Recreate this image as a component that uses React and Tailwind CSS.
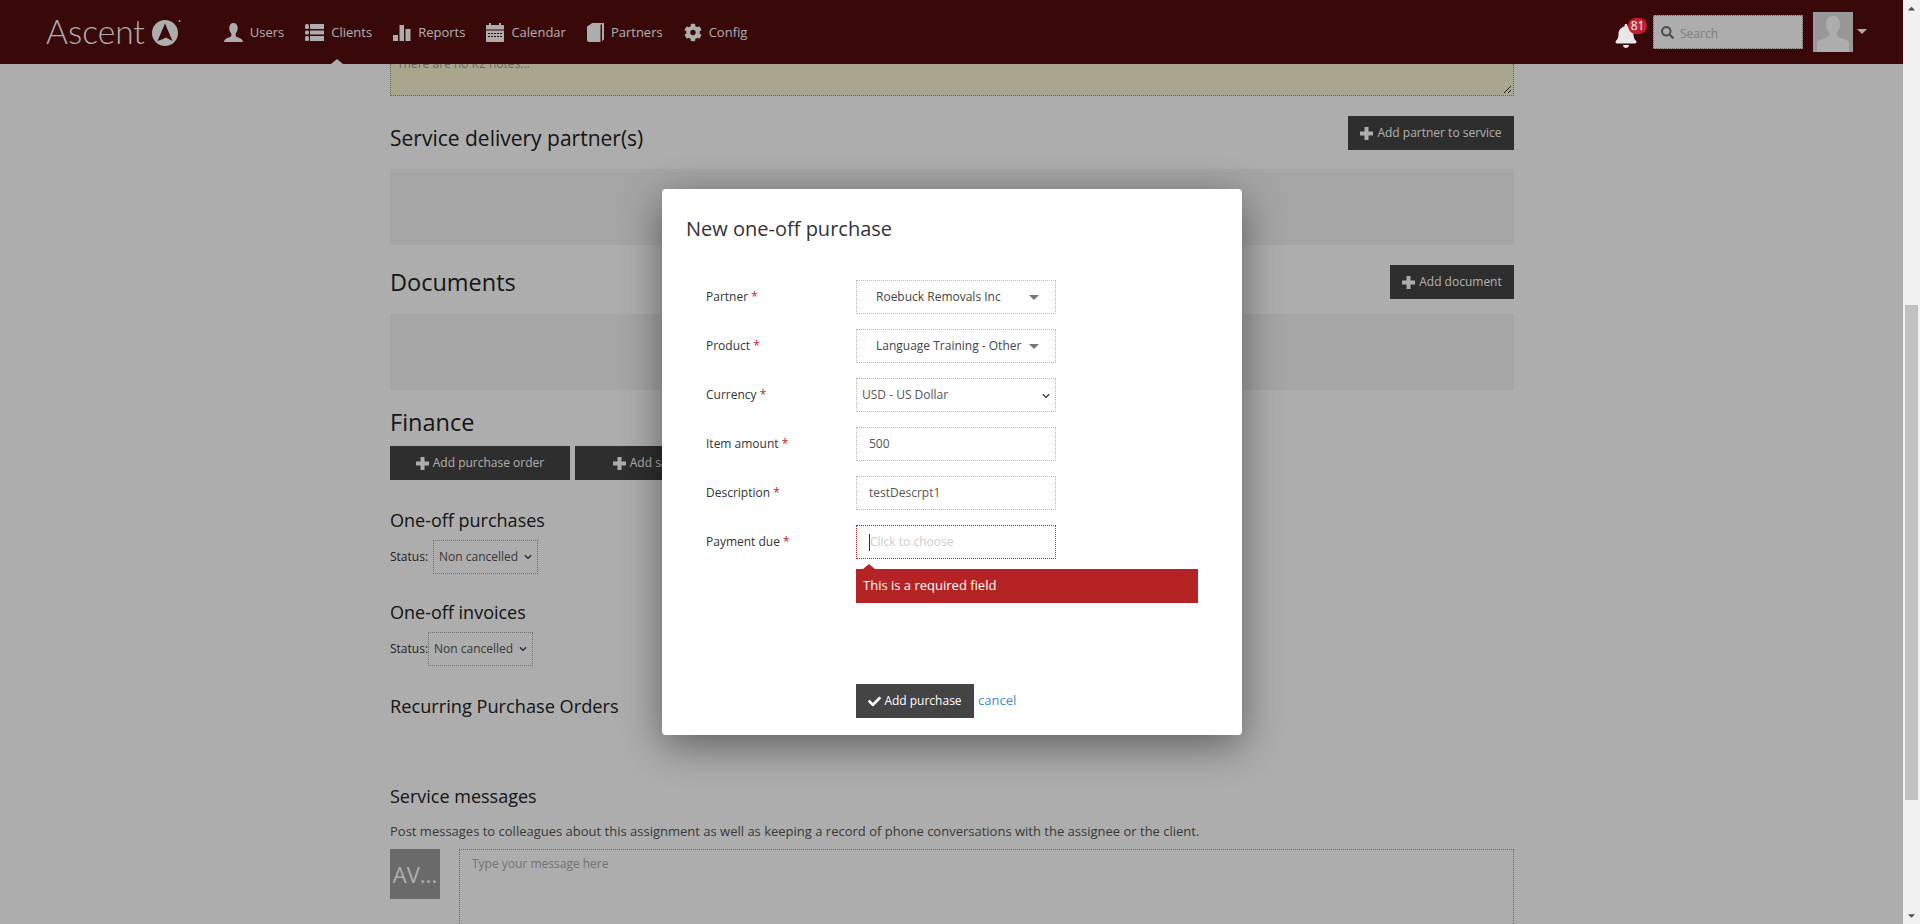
import { FaCog, FaBell, FaSearch, FaCheck, FaChevronDown, FaCaretUp, FaCaretDown } from "react-icons/fa";

function UserIcon() {
  return (
    <svg width="19" height="19" viewBox="0 0 19 19" fill="currentColor">
      <path d="M9.500 0C6.800 0 5.300 2 5.300 5c0 2.300.8 4.300 2 5.500v1.700c0 1-.6 1.500-2 2.100C3 15.200.6 15.800 0 19h19c-.6-3.200-3-3.800-5.300-4.700-1.400-.6-2-1.100-2-2.100v-1.700c1.200-1.200 2-3.200 2-5.500 0-3-1.500-5-4.200-5z" />
    </svg>
  );
}

function ListIcon() {
  return (
    <svg width="19" height="19" viewBox="0 0 19 19" fill="currentColor">
      <rect x="0" y="1" width="4" height="5" rx="1.500" />
      <rect x="5" y="1" width="14" height="5" />
      <rect x="0" y="7.500" width="4" height="4" rx="1.500" />
      <rect x="5" y="7.500" width="14" height="4" />
      <rect x="0" y="13" width="4" height="5" rx="1.500" />
      <rect x="5" y="13" width="14" height="5" />
    </svg>
  );
}

function BarsIcon() {
  return (
    <svg width="18" height="19" viewBox="0 0 18 19" fill="currentColor">
      <rect x="0" y="12" width="5" height="6" />
      <rect x="6.500" y="2" width="4.500" height="16" />
      <rect x="12.500" y="6" width="5" height="12" />
    </svg>
  );
}

function CalendarIcon() {
  return (
    <svg width="18" height="19" viewBox="0 0 18 19" fill="currentColor">
      <path d="M1 2h2V0h2v2h8V0h2v2h2c.6 0 1 .4 1 1v3.500H0V3c0-.6.4-1 1-1z" />
      <path fillRule="evenodd" d="M0 7.500h18V18c0 .6-.4 1-1 1H1c-.6 0-1-.4-1-1V7.500zM2 10v1h2v-1H2zm3 0v1h2v-1H5zm3 0v1h2v-1H8zm3 0v1h2v-1h-2zm3 0v1h2v-1h-2zM2 13v1h2v-1H2zm3 0v1h2v-1H5zm3 0v1h2v-1H8zm3 0v1h2v-1h-2zm3 0v1h2v-1h-2z" />
    </svg>
  );
}

function BookIcon() {
  return (
    <svg width="17" height="19" viewBox="0 0 17 19" fill="currentColor">
      <path d="M0 3.500 4 1h9.500v18H2c-1.200 0-2-.8-2-2V3.500z" />
      <path d="M4.500 0H17v16.500l-2 1.500V1.500H4.500z" />
    </svg>
  );
}

function PlusIcon() {
  return (
    <svg width="13" height="13" viewBox="0 0 13 13" fill="currentColor">
      <path d="M4.500 0h4v4.500H13v4H8.500V13h-4V8.500H0v-4h4.500z" />
    </svg>
  );
}

const navItems = [
  { label: "Users", icon: <UserIcon /> },
  { label: "Clients", icon: <ListIcon /> },
  { label: "Reports", icon: <BarsIcon /> },
  { label: "Calendar", icon: <CalendarIcon /> },
  { label: "Partners", icon: <BookIcon /> },
  { label: "Config", icon: <FaCog className="w-[18px] h-[19px]" /> },
];

function Logo() {
  return (
    <div className="flex items-center mr-[42px] text-white">
      <span className="font-['Lato'] font-light text-[33.500px] leading-none">Ascent</span>
      <svg className="ml-[7px] mt-[1px]" width="30" height="27" viewBox="0 0 30 27">
        <ellipse cx="13" cy="14" rx="13" ry="13" fill="#fff" />
        <path d="M13 4.500 20.500 22 14 18.500 11 20 5.500 22z" fill="#550c0c" />
        <circle cx="27.500" cy="2" r="1" fill="#fff" />
      </svg>
    </div>
  );
}

function AvatarPic() {
  return (
    <div className="w-10 h-10 bg-[#e1e1e1] overflow-hidden">
      <svg width="40" height="40" viewBox="0 0 40 40">
        <path d="M20 4c-5 0-7 3.500-7 8 0 4 1.500 7 3.500 9 0 3-1 4-4 5-4 1-7.500 2-8.500 5v9h32v-9c-1-3-4.500-4-8.500-5-3-1-4-2-4-5 2-2 3.500-5 3.500-9 0-4.500-2-8-7-8z" fill="#fff" />
      </svg>
    </div>
  );
}

function Header() {
  return (
    <header className="h-16 shrink-0 bg-[#550c0c] flex items-center pl-[46px] pr-[36px] relative">
      <Logo />
      <nav className="flex items-center gap-[21px] text-white text-[13px]">
        {navItems.map((item) => (
          <a key={item.label} className="flex items-center gap-[7px]">
            {item.icon}
            <span className="pt-[2px]">{item.label}</span>
          </a>
        ))}
      </nav>
      <div className="absolute left-[331px] top-[59px] w-0 h-0 border-x-[6px] border-x-transparent border-b-[5px] border-b-white" />
      <div className="ml-auto flex items-center">
        <div className="relative z-20 mt-[8px] mr-[16px] text-[#e8e8e8]">
          <FaBell className="w-[22px] h-[24px]" />
          <span className="absolute -top-[6px] left-[13px] w-[19px] h-[16px] rounded-full bg-[#c41f33] text-white text-[12px] leading-[16px] text-center">81</span>
        </div>
        <div className="w-[150px] h-[34px] bg-white border border-dotted border-[#999] flex items-center pl-[7px] gap-[6px] text-[12px] text-[#bbb]">
          <FaSearch className="w-[13px] h-[13px] text-[#777]" />
          <span className="pt-[3px]">Search</span>
        </div>
        <div className="ml-[10px]"><AvatarPic /></div>
        <div className="ml-[4px] -mt-[2px] w-0 h-0 border-x-[5px] border-x-transparent border-t-[5px] border-t-white" />
      </div>
    </header>
  );
}

function DarkButton({ children, className }) {
  return (
    <button className={`h-[34px] bg-[#444] text-white text-[12px] flex items-center justify-center gap-[4px] ${className}`}>
      <PlusIcon />
      {children}
    </button>
  );
}

function StatusRow({ offset }) {
  return (
    <div className="mt-[6px] flex items-center text-[12px] text-[#333]">
      <span>Status:</span>
      <div className={`h-[34px] w-[105px] border border-dotted border-[#aaa] flex items-center pl-[5px] text-[#555] ${offset}`}>
        Non cancelled
        <FaChevronDown className="ml-[5px] w-[10px] h-[8px] text-[#333]" />
      </div>
    </div>
  );
}

function Page() {
  return (
    <main className="w-[1124px] ml-[390px] font-['Open_Sans'] text-[#222]">
      <div className="relative h-[32px] bg-[#fbf5d2] border-x border-b border-dotted border-[#999] overflow-hidden text-[12px] text-[#999] pl-[6px] leading-[12px]">
        <div className="-mt-[6px]">There are no K2 notes...</div>
        <svg className="absolute right-[1px] bottom-[1px]" width="9" height="9" viewBox="0 0 9 9" stroke="#333" fill="none">
          <path d="M1 8 8 1M5 8 8 5" />
        </svg>
      </div>

      <div className="mt-[20px] h-[34px] flex items-start justify-between">
        <h2 className="pt-[8px] text-[21px] leading-[28px]">Service delivery partner(s)</h2>
        <DarkButton className="w-[166px]">Add partner to service</DarkButton>
      </div>
      <div className="mt-[19px] h-[76px] bg-[#f4f4f4]" />

      <div className="mt-[20px] flex items-center justify-between">
        <h2 className="text-[23.500px] leading-[32px]">Documents</h2>
        <DarkButton className="w-[124px]">Add document</DarkButton>
      </div>
      <div className="mt-[15px] h-[76px] bg-[#f4f4f4]" />

      <h2 className="mt-[16px] text-[23.500px] leading-[32px]">Finance</h2>
      <div className="mt-[8px] flex gap-[5px]">
        <DarkButton className="w-[180px]">Add purchase order</DarkButton>
        <DarkButton className="w-[180px]">Add sales order</DarkButton>
      </div>

      <h3 className="mt-[26px] text-[18px] leading-[28px]">One-off purchases</h3>
      <StatusRow offset="ml-[5px]" />
      <h3 className="mt-[24px] text-[18px] leading-[28px]">One-off invoices</h3>
      <StatusRow offset="ml-0" />
      <h3 className="mt-[26px] text-[18.200px] leading-[28px]">Recurring Purchase Orders</h3>

      <h3 className="mt-[62px] text-[18px] leading-[28px]">Service messages</h3>
      <p className="mt-[11px] text-[13px] leading-[20px] text-[#555]">Post messages to colleagues about this assignment as well as keeping a record of phone conversations with the assignee or the client.</p>
      <div className="mt-[8px] flex gap-[19px]">
        <div className="w-[50px] h-[50px] shrink-0 bg-[#9d9d9d] text-white text-[22px] flex items-center justify-center overflow-hidden">AV...</div>
        <div className="flex-1 h-[200px] border border-dotted border-[#999] pl-[12px] pt-[5px] text-[12px] text-[#aaa]">Type your message here</div>
      </div>
    </main>
  );
}

function Field({ label, children, className = "border-[#bbb]" }) {
  return (
    <div className="flex items-center mb-[15px]">
      <label className="w-[150px] text-[12px] text-[#333]">
        {label} <span className="text-[#c22]">*</span>
      </label>
      <div className={`relative w-[200px] h-[34px] border border-dotted flex items-center text-[12px] text-[#555] ${className}`}>
        {children}
      </div>
    </div>
  );
}

function Modal() {
  return (
    <div className="absolute z-30 left-[662px] top-[189px] w-[580px] h-[546px] bg-white rounded-[4px] shadow-[0_10px_40px_rgba(0,0,0,0.45)] font-['Open_Sans'] pl-[24px] pt-[26px]">
      <h2 className="text-[20px] leading-[28px] text-[#333]">New one-off purchase</h2>
      <div className="mt-[37px] pl-[20px]">
        <Field label="Partner">
          <span className="ml-[19px] text-[#444]">Roebuck Removals Inc</span>
          <span className="absolute right-[16px] top-[14px] w-0 h-0 border-x-[5px] border-x-transparent border-t-[5px] border-t-[#777]" />
        </Field>
        <Field label="Product">
          <span className="ml-[19px] text-[#444]">Language Training - Other</span>
          <span className="absolute right-[16px] top-[14px] w-0 h-0 border-x-[5px] border-x-transparent border-t-[5px] border-t-[#777]" />
        </Field>
        <Field label="Currency">
          <span className="ml-[5px]">USD - US Dollar</span>
          <FaChevronDown className="absolute right-[4px] top-[13px] w-[10px] h-[8px] text-[#333]" />
        </Field>
        <Field label="Item amount">
          <span className="ml-[12px]">500</span>
        </Field>
        <Field label="Description">
          <span className="ml-[12px]">testDescrpt1</span>
        </Field>
        <Field label="Payment due" className="border-[#b52424]">
          <span className="ml-[12px] w-px h-[17px] bg-[#333]" />
          <span className="text-[#ccc]">Click to choose</span>
        </Field>
        <div className="relative ml-[150px] -mt-[5px] w-[342px] h-[34px] bg-[#b52424] text-white text-[13px] flex items-center pl-[7px]">
          <span className="absolute -top-[5px] left-[7px] w-0 h-0 border-x-[6px] border-x-transparent border-b-[5px] border-b-[#b52424]" />
          This is a required field
        </div>
        <div className="ml-[150px] mt-[81px] flex items-center gap-[4px]">
          <button className="w-[118px] h-[34px] bg-[#444] text-white text-[12px] flex items-center justify-center gap-[3px]">
            <FaCheck className="w-[13px] h-[13px]" />
            Add purchase
          </button>
          <a className="text-[13px] text-[#3a8ccc]">cancel</a>
        </div>
      </div>
    </div>
  );
}

function Scrollbar() {
  return (
    <div className="w-[17px] shrink-0 bg-[#f1f1f1] relative text-[#505050]">
      <FaCaretUp className="absolute top-[3px] left-[3px] w-[11px] h-[11px]" />
      <div className="absolute top-[305px] left-[2px] w-[13px] h-[495px] bg-[#c1c1c1]" />
      <FaCaretDown className="absolute bottom-[3px] left-[3px] w-[11px] h-[11px]" />
    </div>
  );
}

export default function App() {
  return (
    <div className="w-[1920px] h-[924px] flex overflow-hidden bg-white font-['Open_Sans']">
      <div className="w-[1903px] h-[924px] relative overflow-hidden">
        <Header />
        <Page />
        <div className="absolute inset-0 z-10 bg-black/32" />
        <Modal />
      </div>
      <Scrollbar />
    </div>
  );
}
